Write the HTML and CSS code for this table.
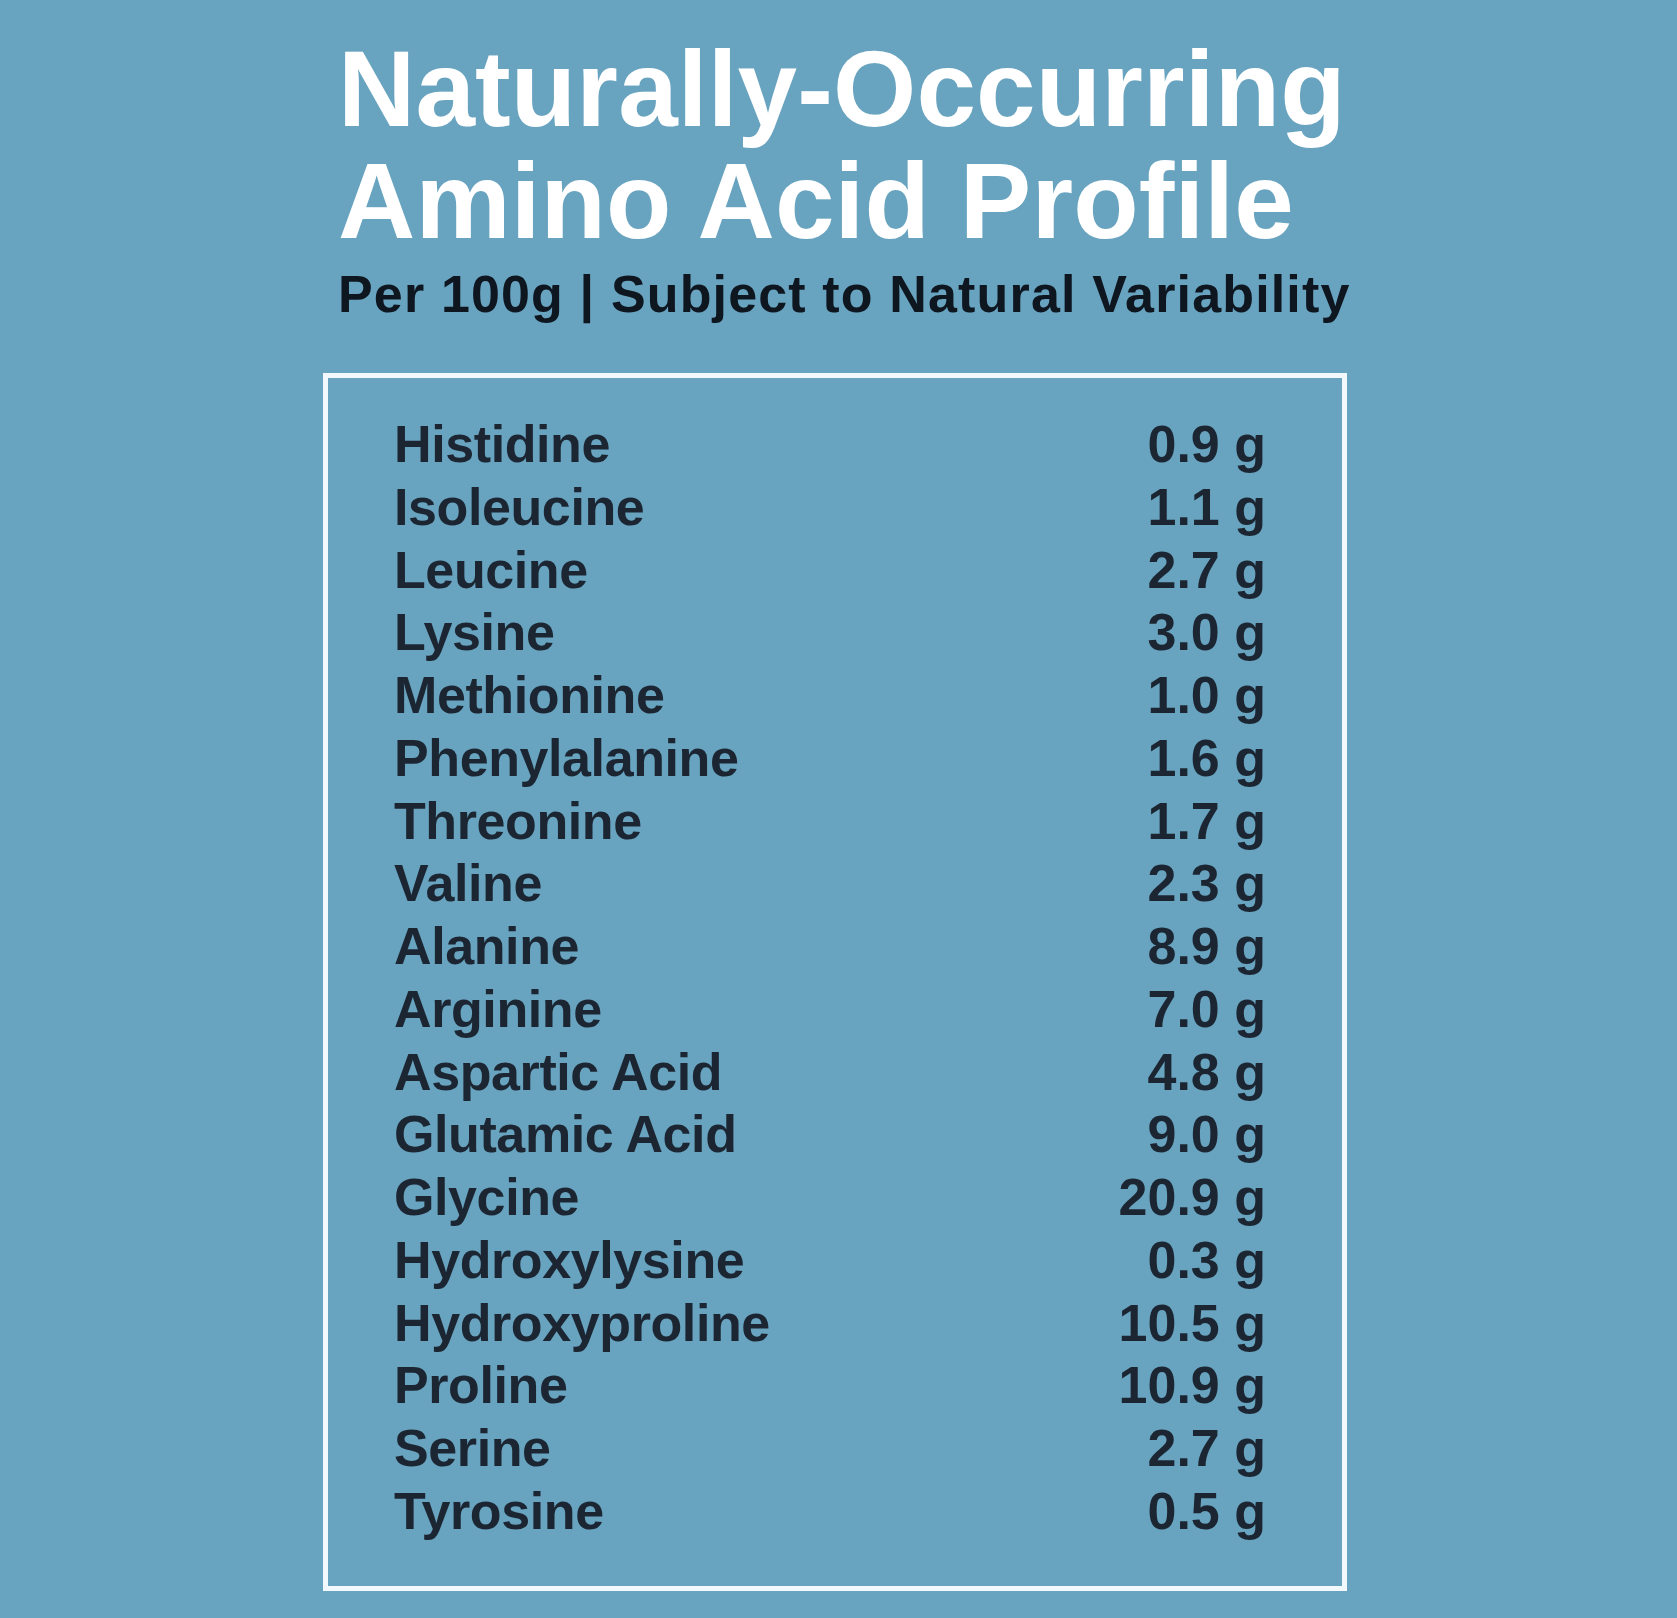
FILE: index.html
```html
<!DOCTYPE html>
<html lang="en">
<head>
<meta charset="utf-8">
<title>Amino Acid Profile</title>
<link rel="stylesheet" href="styles.css">
</head>
<body>
<main class="page">
  <header class="header">
    <h1 class="title">Naturally-Occurring<br>Amino Acid Profile</h1>
    <p class="subtitle">Per 100g | Subject to Natural Variability</p>
  </header>
  <section class="panel">
    <ul class="list">
      <li class="row"><span class="name">Histidine</span><span class="value">0.9 g</span></li>
      <li class="row"><span class="name">Isoleucine</span><span class="value">1.1 g</span></li>
      <li class="row"><span class="name">Leucine</span><span class="value">2.7 g</span></li>
      <li class="row"><span class="name">Lysine</span><span class="value">3.0 g</span></li>
      <li class="row"><span class="name">Methionine</span><span class="value">1.0 g</span></li>
      <li class="row"><span class="name">Phenylalanine</span><span class="value">1.6 g</span></li>
      <li class="row"><span class="name">Threonine</span><span class="value">1.7 g</span></li>
      <li class="row"><span class="name">Valine</span><span class="value">2.3 g</span></li>
      <li class="row"><span class="name">Alanine</span><span class="value">8.9 g</span></li>
      <li class="row"><span class="name">Arginine</span><span class="value">7.0 g</span></li>
      <li class="row"><span class="name">Aspartic Acid</span><span class="value">4.8 g</span></li>
      <li class="row"><span class="name">Glutamic Acid</span><span class="value">9.0 g</span></li>
      <li class="row"><span class="name">Glycine</span><span class="value">20.9 g</span></li>
      <li class="row"><span class="name">Hydroxylysine</span><span class="value">0.3 g</span></li>
      <li class="row"><span class="name">Hydroxyproline</span><span class="value">10.5 g</span></li>
      <li class="row"><span class="name">Proline</span><span class="value">10.9 g</span></li>
      <li class="row"><span class="name">Serine</span><span class="value">2.7 g</span></li>
      <li class="row"><span class="name">Tyrosine</span><span class="value">0.5 g</span></li>
    </ul>
  </section>
</main>
</body>
</html>
```

FILE: styles.css
```css
html, body {
  margin: 0;
  padding: 0;
}

body {
  background: #68a3bf;
  width: 1677px;
  height: 1618px;
  overflow: hidden;
  font-family: "Liberation Sans", Arial, sans-serif;
}

.page {
  padding: 33px 0 0 323px;
}

.header {
  padding-left: 15px;
}

.title {
  margin: 0;
  font-size: 107px;
  line-height: 112px;
  font-weight: 700;
  color: #ffffff;
  letter-spacing: 0.15px;
}

.subtitle {
  margin: 7px 0 0 0;
  font-size: 52px;
  line-height: 60px;
  font-weight: 700;
  color: #0e1620;
  letter-spacing: 1.15px;
}

.panel {
  margin-top: 49px;
  width: 1014px;
  height: 1208px;
  border: 5px solid #f2f9fc;
  box-sizing: content-box;
}

.list {
  list-style: none;
  margin: 0;
  padding: 35px 76px 0 66px;
}

.row {
  display: flex;
  justify-content: space-between;
  font-size: 52px;
  line-height: 62.75px;
  font-weight: 700;
  color: #1c2632;
}

.name {
  letter-spacing: -0.4px;
}

.value {
  text-align: right;
}
```
